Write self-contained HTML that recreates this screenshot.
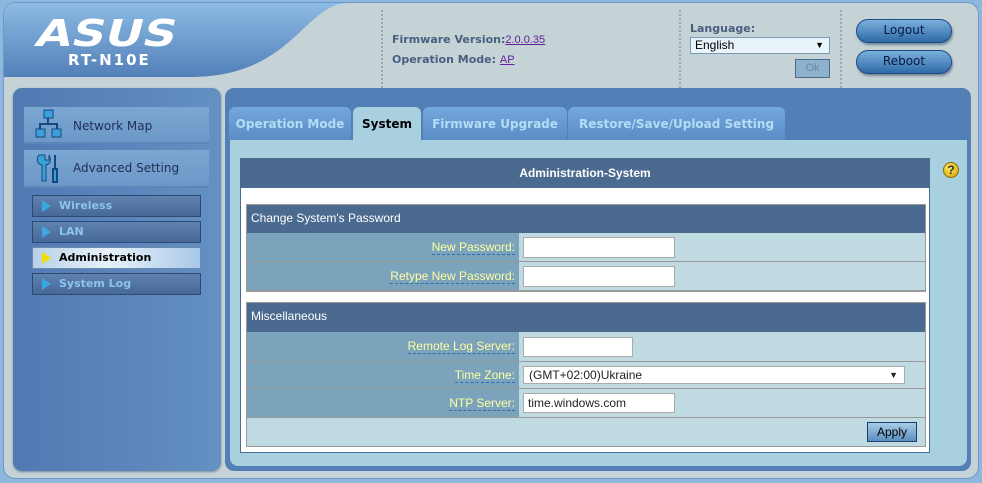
<!DOCTYPE html>
<html><head><meta charset="utf-8"><style>
*{box-sizing:border-box;margin:0;padding:0}
body{width:982px;height:483px;background:#8fb6dc;font-family:"Liberation Sans",sans-serif;position:relative;overflow:hidden}
.abs{position:absolute}
.frame{left:3px;top:2px;width:976px;height:477px;background:#c5d2d6;border-radius:12px;border:1px solid #6e98c8;overflow:hidden}
.b{font-family:"DejaVu Sans",sans-serif;font-weight:bold}
.dot{border-left:2px dotted #9aa;width:0;top:10px;height:78px}
.lp{left:13px;top:88px;width:208px;height:383px;border-radius:9px;background:linear-gradient(90deg,#5279b2,#6490c2);box-shadow:0 1px 2px #789}
.mi{left:24px;width:185px;background:linear-gradient(#7ca6d2,#6c98c8);border-bottom:2px solid #5c86b8;font-family:"DejaVu Sans",sans-serif;font-size:12px;color:#1e2e56}
.sm{left:32px;width:169px;height:22px;background:linear-gradient(#5f82b0,#46699a);border:1px solid #2e4a72;font-family:"DejaVu Sans",sans-serif;font-weight:bold;font-size:11px;color:#8cc4ec;padding:2px 0 0 26px;line-height:16px}
.sm i{position:absolute;left:9px;top:4px;width:0;height:0;border-left:9px solid #3aa8e0;border-top:6px solid transparent;border-bottom:6px solid transparent}
.mp{left:225px;top:88px;width:746px;height:383px;border-radius:9px;background:#527fb5}
.tab{top:107px;height:33px;background:linear-gradient(#74a8dc,#5a8cc6);border-radius:6px 6px 0 0;color:#b4dcf4;font-family:"DejaVu Sans",sans-serif;font-weight:bold;font-size:12px;text-align:center;padding-top:10px;white-space:nowrap}
.ca{left:230px;top:140px;width:737px;height:326px;background:#a9d0df;border-radius:0 0 8px 8px}
.wb{left:240px;top:158px;width:690px;height:295px;background:#fff;border:1px solid #4a6a90}
.th{background:#4b6a90;color:#fff;font-size:12px;padding-left:5px;line-height:28px}
.lbl{background:#7ba3bc;color:#ffffa0;font-size:12px;text-align:right;padding-right:4px;border-bottom:1px solid #999}
.lbl span{border-bottom:1px dashed #2a70b0}
.val{background:#c0dae2;border-bottom:1px solid #999}
.inp{position:absolute;background:#fff;border:1px solid #aaa;font-size:12px;color:#222;padding:2px 4px}
.btn{position:absolute;width:96px;height:24px;border-radius:12px;background:linear-gradient(#7ab0dc,#2e6aa8);border:1px solid #1e4a80;color:#0a1a40;font-size:12px;text-align:center;line-height:20px;font-family:"DejaVu Sans",sans-serif;box-shadow:1px 2px 2px #789}
</style></head><body>
<div class="abs frame">
 <svg class="abs" style="left:0;top:0" width="360" height="90"><defs><linearGradient id="g" x1="0" y1="0" x2="0" y2="1"><stop offset="0" stop-color="#8dbbe4"/><stop offset="1" stop-color="#5280b8"/></linearGradient></defs><path d="M0 0H345 C300 0 290 72 190 74 L0 74Z" fill="url(#g)"/></svg>
 <div class="abs" style="left:33px;top:9px;font-family:'DejaVu Sans',sans-serif;font-weight:bold;font-size:37px;color:#fff;transform:scaleX(1.25) skewX(-12deg);transform-origin:left">ASUS</div>
 <div class="abs b" style="left:64px;top:48px;font-size:15px;color:#fff;letter-spacing:2px">RT-N10E</div>
</div>
<div class="abs dot" style="left:381px"></div>
<div class="abs dot" style="left:679px"></div>
<div class="abs dot" style="left:840px"></div>
<div class="abs b" style="left:392px;top:33px;font-size:11px;color:#4a5e80">Firmware Version:<span style="font-family:'Liberation Sans';font-weight:normal;color:#63209a;text-decoration:underline">2.0.0.35</span></div>
<div class="abs b" style="left:392px;top:53px;font-size:11px;color:#4a5e80">Operation Mode: <span style="font-family:'Liberation Sans';font-weight:normal;color:#63209a;text-decoration:underline">AP</span></div>
<div class="abs b" style="left:690px;top:22px;font-size:11px;color:#4a5e80">Language:</div>
<div class="abs" style="left:690px;top:37px;width:140px;height:17px;background:#e8f4fa;border:1px solid #7a9ab8;font-size:12px;padding-left:4px;line-height:15px">English<span style="position:absolute;right:5px;font-size:9px">▼</span></div>
<div class="abs" style="left:795px;top:59px;width:35px;height:19px;background:#8fb2cc;border:1px solid #4a6a90;color:#6a8aa8;font-size:11px;text-align:center;line-height:17px">Ok</div>
<div class="btn" style="left:856px;top:19px">Logout</div>
<div class="btn" style="left:856px;top:50px">Reboot</div>

<div class="abs lp"></div>
<div class="abs mi" style="top:107px;height:37px;padding:12px 0 0 49px">Network Map</div>
<svg class="abs" style="left:35px;top:109px" width="28" height="30"><g fill="#3aa0d8" stroke="#104a80"><rect x="9" y="1" width="9" height="8"/><rect x="1" y="20" width="9" height="8"/><rect x="17" y="20" width="9" height="8"/></g><path d="M13 9V15M5 20V15H22V20" stroke="#104a80" fill="none" stroke-width="2"/></svg>
<div class="abs mi" style="top:150px;height:38px;padding:11px 0 0 49px">Advanced Setting</div>
<svg class="abs" style="left:35px;top:153px" width="28" height="32"><path d="M4 2C1 6 2 11 7 12V28H11V12C16 11 16 6 14 2V7H10V2Z" fill="#3aa0d8" stroke="#104a80"/><path d="M20 2V16M18 16H22V29H18Z" stroke="#104a80" fill="#3aa0d8" stroke-width="2"/></svg>
<div class="abs sm" style="top:195px"><i></i>Wireless</div>
<div class="abs sm" style="top:221px"><i></i>LAN</div>
<div class="abs sm" style="top:247px;background:linear-gradient(90deg,#b8d0e8,#e8f2fa 45%,#a8c8e8);color:#000;border-color:#6a8ab0"><i style="border-left-color:#f0e000"></i>Administration</div>
<div class="abs sm" style="top:273px"><i></i>System Log</div>

<div class="abs mp"></div>
<div class="abs tab" style="left:229px;width:122px">Operation Mode</div>
<div class="abs tab" style="left:353px;width:68px;background:#a9d0df;color:#000">System</div>
<div class="abs tab" style="left:423px;width:144px">Firmware Upgrade</div>
<div class="abs tab" style="left:568px;width:217px">Restore/Save/Upload Setting</div>
<div class="abs ca"></div>
<div class="abs wb"><div style="background:#4b6a90;color:#fff;font-weight:bold;font-size:12px;text-align:center;line-height:29px;height:29px">Administration-System</div></div>
<div class="abs" style="left:943px;top:162px;width:16px;height:16px;border-radius:50%;background:radial-gradient(circle at 40% 35%,#ffe860,#d0a000);border:1px solid #8a6a00;font-size:12px;font-weight:bold;text-align:center;line-height:14px;color:#333">?</div>

<div class="abs th" style="left:246px;top:204px;width:680px;height:29px">Change System's Password</div>
<div class="abs lbl" style="left:247px;top:233px;width:272px;height:29px;line-height:28px"><span>New Password:</span></div>
<div class="abs val" style="left:519px;top:233px;width:407px;height:29px"></div>
<div class="abs lbl" style="left:247px;top:262px;width:272px;height:29px;line-height:28px"><span>Retype New Password:</span></div>
<div class="abs val" style="left:519px;top:262px;width:407px;height:29px"></div>
<div class="abs" style="left:246px;top:204px;width:680px;height:88px;border:1px solid #999"></div>
<div class="inp" style="left:523px;top:237px;width:152px;height:21px"></div>
<div class="inp" style="left:523px;top:266px;width:152px;height:21px"></div>

<div class="abs th" style="left:246px;top:302px;width:680px;height:30px">Miscellaneous</div>
<div class="abs lbl" style="left:247px;top:332px;width:272px;height:30px;line-height:29px"><span>Remote Log Server:</span></div>
<div class="abs val" style="left:519px;top:332px;width:407px;height:30px"></div>
<div class="abs lbl" style="left:247px;top:362px;width:272px;height:27px;line-height:26px"><span>Time Zone:</span></div>
<div class="abs val" style="left:519px;top:362px;width:407px;height:27px"></div>
<div class="abs lbl" style="left:247px;top:389px;width:272px;height:29px;line-height:28px"><span>NTP Server:</span></div>
<div class="abs val" style="left:519px;top:389px;width:407px;height:29px"></div>
<div class="abs val" style="left:247px;top:418px;width:679px;height:29px"></div>
<div class="abs" style="left:246px;top:302px;width:680px;height:145px;border:1px solid #999"></div>
<div class="inp" style="left:523px;top:337px;width:110px;height:20px"></div>
<div class="inp" style="left:523px;top:366px;width:382px;height:18px;padding:1px 5px;line-height:14px">(GMT+02:00)Ukraine<span style="position:absolute;right:6px;font-size:9px">▼</span></div>
<div class="inp" style="left:523px;top:393px;width:152px;height:20px;line-height:14px">time.windows.com</div>
<div class="abs" style="left:867px;top:422px;width:50px;height:20px;background:linear-gradient(#a8cce6,#5a8ec0);border:1px solid #1e3e70;font-size:12px;text-align:center;line-height:19px">Apply</div>
</body></html>
